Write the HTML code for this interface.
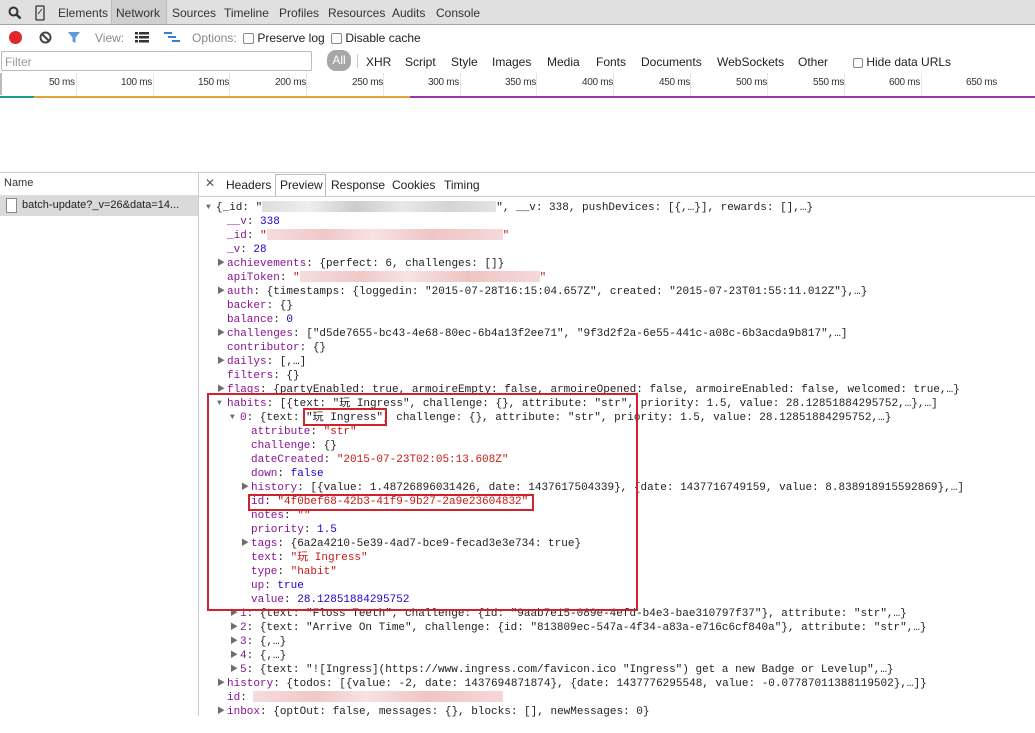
<!DOCTYPE html>
<html><head><meta charset="utf-8">
<style>
*{margin:0;padding:0;box-sizing:border-box}
body{width:1035px;height:716px;overflow:hidden;background:#fff;font-family:"Liberation Sans",sans-serif;font-size:12px;color:#222;position:relative}
.abs{position:absolute}
#tb{left:0;top:0;width:1035px;height:25px;background:#e0e0e0;border-bottom:1px solid #a3a3a3}
#tb span{position:absolute;top:6px;font-size:12px;color:#333}
.cb{display:inline-block;width:11px;height:11px;border:1px solid #888;border-radius:2px;background:#fff;vertical-align:-2px}
.ms{position:absolute;top:77px;font-size:10px;color:#333;letter-spacing:-0.3px}
.vl{position:absolute;top:73px;width:1px;height:23px;background:#e6e6e6}
#code{position:absolute;left:0;top:201px;font-family:"Liberation Mono","Noto Sans CJK SC",monospace;font-size:11px;line-height:14px;white-space:pre;color:#222}
#code div{position:absolute;height:14px}
.k{color:#881391}.s{color:#c41a16}.n{color:#1c00cf}
.ar{position:absolute;left:-10px;top:0;font-size:8px;color:#6e6e6e}
.bg{display:inline-block;height:11px;vertical-align:-2px;background:linear-gradient(90deg,#ddd,#eee 20%,#ccc 40%,#e8e8e8 60%,#d4d4d4 80%,#e4e4e4)}
.bp{display:inline-block;height:11px;vertical-align:-2px;background:linear-gradient(90deg,#f6dcdc,#f0c8c8 25%,#f8e2e2 45%,#efc4c4 70%,#f6d8d8)}
.rb{position:absolute;border:2px solid #d0222a}
</style></head><body>
<div id="tb" class="abs">
<svg class="abs" style="left:8px;top:6px" width="14" height="14"><circle cx="5.5" cy="5.5" r="4" fill="none" stroke="#333" stroke-width="2"/><path d="M8.5 8.5L12.5 12.5" stroke="#333" stroke-width="2.4"/></svg>
<svg class="abs" style="left:35px;top:5px" width="10" height="16"><rect x="1" y="1" width="8" height="14" rx="1" fill="none" stroke="#333" stroke-width="1.3"/><path d="M3 9L7 4" stroke="#333"/></svg>
<span style="left:58px">Elements</span>
<div class="abs" style="left:111px;top:0;width:56px;height:24px;background:#cfcfcf;border-left:1px solid #bbb;border-right:1px solid #bbb"></div>
<span style="left:116px">Network</span>
<span style="left:172px">Sources</span><span style="left:224px">Timeline</span><span style="left:279px">Profiles</span><span style="left:328px">Resources</span><span style="left:392px">Audits</span><span style="left:436px">Console</span>
</div>
<div class="abs" style="left:9px;top:31px;width:13px;height:13px;border-radius:50%;background:#e0282b"></div>
<svg class="abs" style="left:39px;top:31px" width="13" height="13"><circle cx="6.5" cy="6.5" r="5" fill="none" stroke="#444" stroke-width="2"/><path d="M3 3L10 10" stroke="#444" stroke-width="2"/></svg>
<svg class="abs" style="left:67px;top:31px" width="14" height="13"><path d="M1 1H13L8.5 6.5V12L5.5 10.5V6.5Z" fill="#5a9be0"/></svg>
<span class="abs" style="left:95px;top:31px;color:#888">View:</span>
<svg class="abs" style="left:135px;top:32px" width="14" height="11"><g fill="#333"><rect x="0" y="0" width="3" height="2.5"/><rect x="4" y="0" width="10" height="2.5"/><rect x="0" y="4" width="3" height="2.5"/><rect x="4" y="4" width="10" height="2.5"/><rect x="0" y="8" width="3" height="2.5"/><rect x="4" y="8" width="10" height="2.5"/></g></svg>
<svg class="abs" style="left:164px;top:32px" width="16" height="11"><g fill="#3c7fd0"><rect x="0" y="0" width="8" height="2"/><rect x="4" y="4" width="8" height="2"/><rect x="8" y="8" width="8" height="2"/></g></svg>
<span class="abs" style="left:192px;top:31px;color:#888">Options:</span>
<span class="abs" style="left:243px;top:31px"><i class="cb"></i> Preserve log</span>
<span class="abs" style="left:331px;top:31px"><i class="cb"></i> Disable cache</span>
<div class="abs" style="left:1px;top:51px;width:311px;height:20px;border:1px solid #bbb;border-radius:2px"></div>
<span class="abs" style="left:5px;top:55px;color:#999">Filter</span>
<div class="abs" style="left:327px;top:50px;width:24px;height:21px;border-radius:9px;background:#a7a7a7;color:#fff;text-align:center;line-height:21px">All</div>
<div class="abs" style="left:357px;top:54px;width:1px;height:14px;background:#ccc"></div>
<span class="abs" style="left:366px;top:55px">XHR</span><span class="abs" style="left:405px;top:55px">Script</span><span class="abs" style="left:451px;top:55px">Style</span><span class="abs" style="left:492px;top:55px">Images</span><span class="abs" style="left:547px;top:55px">Media</span><span class="abs" style="left:596px;top:55px">Fonts</span><span class="abs" style="left:641px;top:55px">Documents</span><span class="abs" style="left:717px;top:55px">WebSockets</span><span class="abs" style="left:798px;top:55px">Other</span>
<span class="abs" style="left:853px;top:55px"><i class="cb" style="width:10px;height:10px"></i> Hide data URLs</span>
<div class="abs" style="left:0;top:73px;width:2px;height:22px;background:#bbb"></div>
<div class="vl" style="left:76px"></div><div class="vl" style="left:153px"></div><div class="vl" style="left:229px"></div><div class="vl" style="left:306px"></div><div class="vl" style="left:383px"></div><div class="vl" style="left:460px"></div><div class="vl" style="left:536px"></div><div class="vl" style="left:613px"></div><div class="vl" style="left:690px"></div><div class="vl" style="left:767px"></div><div class="vl" style="left:844px"></div><div class="vl" style="left:921px"></div>
<span class="ms" style="left:49px">50 ms</span><span class="ms" style="left:121px">100 ms</span><span class="ms" style="left:198px">150 ms</span><span class="ms" style="left:275px">200 ms</span><span class="ms" style="left:352px">250 ms</span><span class="ms" style="left:428px">300 ms</span><span class="ms" style="left:505px">350 ms</span><span class="ms" style="left:582px">400 ms</span><span class="ms" style="left:659px">450 ms</span><span class="ms" style="left:736px">500 ms</span><span class="ms" style="left:813px">550 ms</span><span class="ms" style="left:889px">600 ms</span><span class="ms" style="left:966px">650 ms</span>
<div class="abs" style="left:0;top:96px;width:34px;height:2px;background:#1a9e8a"></div>
<div class="abs" style="left:34px;top:96px;width:376px;height:2px;background:#e8a13a"></div>
<div class="abs" style="left:410px;top:96px;width:625px;height:2px;background:#9c37a8"></div>
<div class="abs" style="left:0;top:172px;width:1035px;height:1px;background:#ccc"></div>
<div class="abs" style="left:198px;top:172px;width:1px;height:544px;background:#ccc"></div>
<span class="abs" style="left:4px;top:177px;font-size:11px;color:#333">Name</span>
<div class="abs" style="left:0;top:195px;width:198px;height:1px;background:#ddd"></div>
<div class="abs" style="left:0;top:196px;width:198px;height:20px;background:#dadada"></div>
<div class="abs" style="left:6px;top:198px;width:11px;height:15px;border:1px solid #888;background:#fff"></div>
<span class="abs" style="left:22px;top:199px;font-size:11px">batch-update?_v=26&amp;data=14...</span>
<span class="abs" style="left:205px;top:176px;font-size:12px;color:#555">✕</span>
<span class="abs" style="left:226px;top:178px">Headers</span>
<div class="abs" style="left:275px;top:174px;width:51px;height:22px;border:1px solid #bbb;border-bottom:none"></div>
<span class="abs" style="left:280px;top:178px">Preview</span><span class="abs" style="left:331px;top:178px">Response</span><span class="abs" style="left:392px;top:178px">Cookies</span><span class="abs" style="left:444px;top:178px">Timing</span>
<div class="abs" style="left:199px;top:196px;width:836px;height:1px;background:#ccc"></div>
<div id="code">
<div style="left:216px;top:0"><span class="ar">▼</span>{_id: "<span class="bg" style="width:234px"></span>", __v: 338, pushDevices: [{,…}], rewards: [],…}</div>
<div style="left:227px;top:14px"><span class="k">__v</span>: <span class="n">338</span></div>
<div style="left:227px;top:28px"><span class="k">_id</span>: <span class="s">"</span><span class="bp" style="width:236px"></span><span class="s">"</span></div>
<div style="left:227px;top:42px"><span class="k">_v</span>: <span class="n">28</span></div>
<div style="left:227px;top:56px"><span class="ar">▶</span><span class="k">achievements</span>: {perfect: 6, challenges: []}</div>
<div style="left:227px;top:70px"><span class="k">apiToken</span>: <span class="s">"</span><span class="bp" style="width:240px"></span><span class="s">"</span></div>
<div style="left:227px;top:84px"><span class="ar">▶</span><span class="k">auth</span>: {timestamps: {loggedin: "2015-07-28T16:15:04.657Z", created: "2015-07-23T01:55:11.012Z"},…}</div>
<div style="left:227px;top:98px"><span class="k">backer</span>: {}</div>
<div style="left:227px;top:112px"><span class="k">balance</span>: <span class="n">0</span></div>
<div style="left:227px;top:126px"><span class="ar">▶</span><span class="k">challenges</span>: ["d5de7655-bc43-4e68-80ec-6b4a13f2ee71", "9f3d2f2a-6e55-441c-a08c-6b3acda9b817",…]</div>
<div style="left:227px;top:140px"><span class="k">contributor</span>: {}</div>
<div style="left:227px;top:154px"><span class="ar">▶</span><span class="k">dailys</span>: [,…]</div>
<div style="left:227px;top:168px"><span class="k">filters</span>: {}</div>
<div style="left:227px;top:182px"><span class="ar">▶</span><span class="k">flags</span>: {partyEnabled: true, armoireEmpty: false, armoireOpened: false, armoireEnabled: false, welcomed: true,…}</div>
<div style="left:227px;top:196px"><span class="ar">▼</span><span class="k">habits</span>: [{text: "玩 Ingress", challenge: {}, attribute: "str", priority: 1.5, value: 28.12851884295752,…},…]</div>
<div style="left:240px;top:210px"><span class="ar">▼</span><span class="k">0</span>: {text: "玩 Ingress", challenge: {}, attribute: "str", priority: 1.5, value: 28.12851884295752,…}</div>
<div style="left:251px;top:224px"><span class="k">attribute</span>: <span class="s">"str"</span></div>
<div style="left:251px;top:238px"><span class="k">challenge</span>: {}</div>
<div style="left:251px;top:252px"><span class="k">dateCreated</span>: <span class="s">"2015-07-23T02:05:13.608Z"</span></div>
<div style="left:251px;top:266px"><span class="k">down</span>: <span class="n">false</span></div>
<div style="left:251px;top:280px"><span class="ar">▶</span><span class="k">history</span>: [{value: 1.48726896031426, date: 1437617504339}, {date: 1437716749159, value: 8.838918915592869},…]</div>
<div style="left:251px;top:294px"><span class="k">id</span>: <span class="s">"4f0bef68-42b3-41f9-9b27-2a9e23604832"</span></div>
<div style="left:251px;top:308px"><span class="k">notes</span>: <span class="s">""</span></div>
<div style="left:251px;top:322px"><span class="k">priority</span>: <span class="n">1.5</span></div>
<div style="left:251px;top:336px"><span class="ar">▶</span><span class="k">tags</span>: {6a2a4210-5e39-4ad7-bce9-fecad3e3e734: true}</div>
<div style="left:251px;top:350px"><span class="k">text</span>: <span class="s">"玩 Ingress"</span></div>
<div style="left:251px;top:364px"><span class="k">type</span>: <span class="s">"habit"</span></div>
<div style="left:251px;top:378px"><span class="k">up</span>: <span class="n">true</span></div>
<div style="left:251px;top:392px"><span class="k">value</span>: <span class="n">28.12851884295752</span></div>
<div style="left:240px;top:406px"><span class="ar">▶</span><span class="k">1</span>: {text: "Floss Teeth", challenge: {id: "9aab7e15-089e-4efd-b4e3-bae310797f37"}, attribute: "str",…}</div>
<div style="left:240px;top:420px"><span class="ar">▶</span><span class="k">2</span>: {text: "Arrive On Time", challenge: {id: "813809ec-547a-4f34-a83a-e716c6cf840a"}, attribute: "str",…}</div>
<div style="left:240px;top:434px"><span class="ar">▶</span><span class="k">3</span>: {,…}</div>
<div style="left:240px;top:448px"><span class="ar">▶</span><span class="k">4</span>: {,…}</div>
<div style="left:240px;top:462px"><span class="ar">▶</span><span class="k">5</span>: {text: "![Ingress](https://www.ingress.com/favicon.ico "Ingress") get a new Badge or Levelup",…}</div>
<div style="left:227px;top:476px"><span class="ar">▶</span><span class="k">history</span>: {todos: [{value: -2, date: 1437694871874}, {date: 1437776295548, value: -0.07787011388119502},…]}</div>
<div style="left:227px;top:490px"><span class="k">id</span>: <span class="bp" style="width:250px"></span></div>
<div style="left:227px;top:504px"><span class="ar">▶</span><span class="k">inbox</span>: {optOut: false, messages: {}, blocks: [], newMessages: 0}</div>
</div>
<div class="rb" style="left:207px;top:393px;width:431px;height:218px"></div>
<div class="rb" style="left:303px;top:408px;width:84px;height:18px"></div>
<div class="rb" style="left:248px;top:494px;width:286px;height:17px"></div>
</body></html>
